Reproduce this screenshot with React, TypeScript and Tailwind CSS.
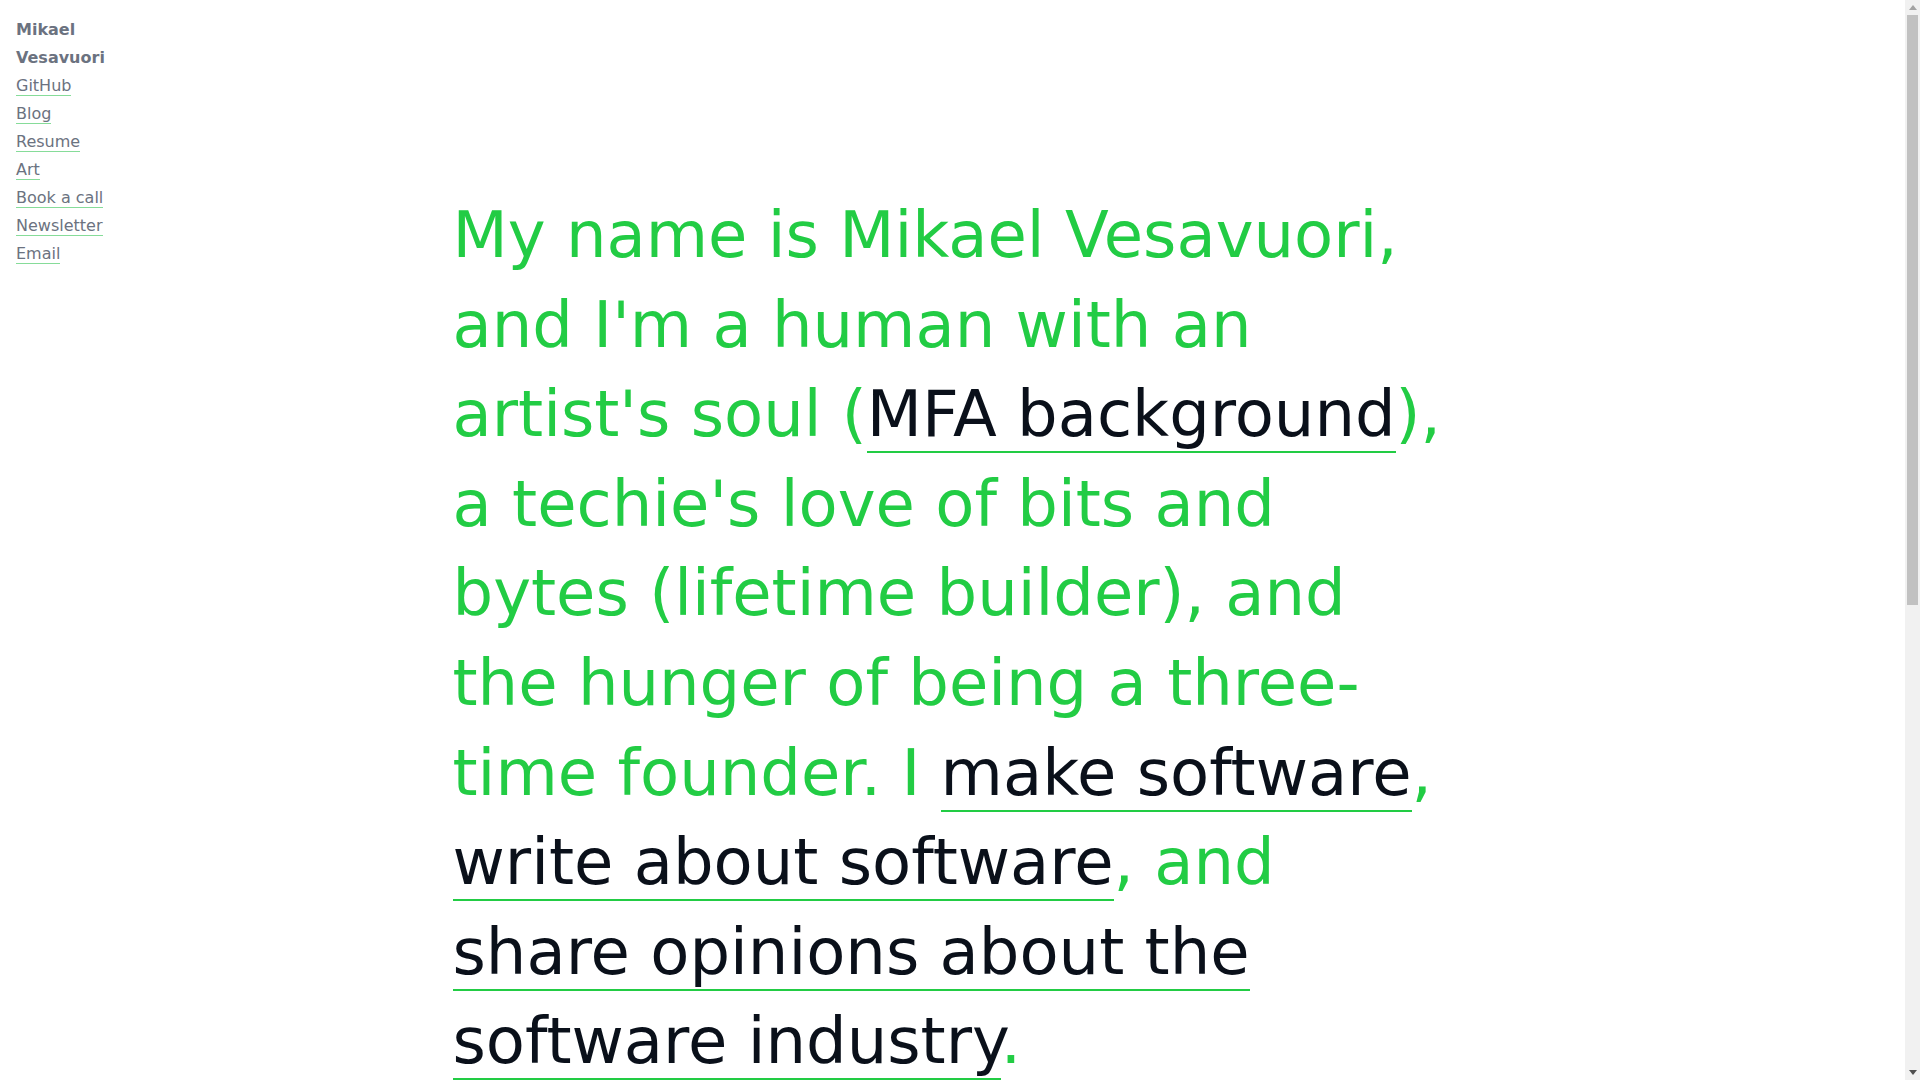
import React from "react";

const navLinks = ["GitHub", "Blog", "Resume", "Art", "Book a call", "Newsletter", "Email"];

function A({ children }: { children: React.ReactNode }) {
  return (
    <a href="#" className="text-[#0a101a] border-b-2 border-[#22cc44] no-underline">
      {children}
    </a>
  );
}

function Scrollbar() {
  return (
    <div className="w-[15px] h-screen bg-[#f1f1f1] flex flex-col shrink-0">
      <div className="h-[15px] flex items-center justify-center">
        <svg width="8" height="5" viewBox="0 0 8 5">
          <polygon points="4,0 8,5 0,5" fill="#a3a3a3" />
        </svg>
      </div>
      <div className="px-[2px] h-[590px]">
        <div className="h-full bg-[#c1c1c1]" />
      </div>
      <div className="flex-1" />
      <div className="h-[15px] flex items-center justify-center">
        <svg width="8" height="5" viewBox="0 0 8 5">
          <polygon points="0,0 8,0 4,5" fill="#505050" />
        </svg>
      </div>
    </div>
  );
}

export default function App() {
  return (
    <div className="flex h-screen bg-white" style={{ fontFamily: '"DejaVu Sans", Verdana, sans-serif' }}>
      <div className="flex-1 overflow-y-auto">
        <div className="grid grid-cols-[1fr_1000px_1fr] min-h-[1922px]">
          <nav className="p-4 text-base leading-7 text-[#6b7280]">
            <div className="font-bold">
              Mikael
              <br />
              Vesavuori
            </div>
            <ul className="flex flex-col">
              {navLinks.map((l) => (
                <li key={l}>
                  <a href="#" className="border-b border-[#86dc99] text-[#6b7280]">
                    {l}
                  </a>
                </li>
              ))}
            </ul>
          </nav>
          <main className="pt-[191px] pb-[200px]">
            <p className="text-[64px] leading-[1.4] text-[#22cc44]">
              My name is Mikael Vesavuori, and I'm a human with an artist's soul (<A>MFA background</A>), a techie's
              love of bits and bytes (lifetime builder), and the hunger of being a three-time founder. I{" "}
              <A>make software</A>, <A>write about software</A>, and <A>share opinions about the software industry</A>.
            </p>
          </main>
          <div />
        </div>
      </div>
      <Scrollbar />
    </div>
  );
}
